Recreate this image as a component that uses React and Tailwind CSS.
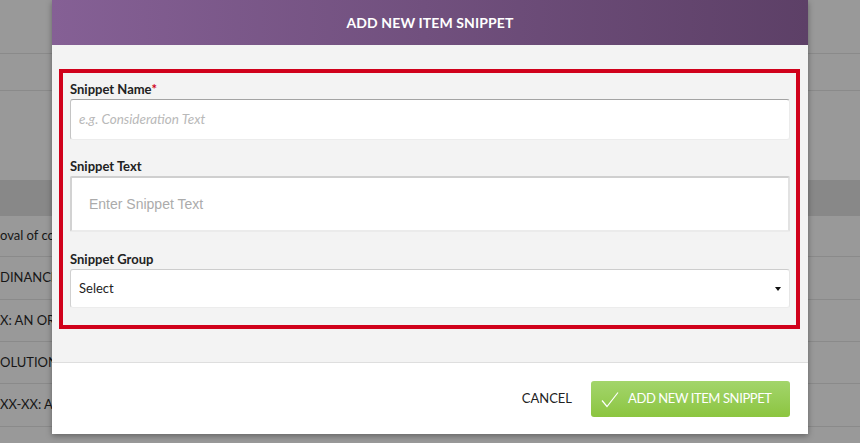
import React from "react";

const lato = { fontFamily: "Lato, 'Noto Sans', sans-serif" };

function BgRow({ text, h = "h-[42px]" }) {
  return (
    <div className={`${h} flex items-center border-b border-[#8a8a8a] text-[13px] text-[#161616] whitespace-nowrap overflow-hidden`}>
      <span>{text}</span>
    </div>
  );
}

export default function App() {
  return (
    <div className="relative w-[860px] h-[443px] overflow-hidden bg-[#999999]" style={lato}>
      {/* background page */}
      <div className="flex flex-col">
        <div className="h-[54px] border-b border-[#8a8a8a]" />
        <div className="h-[37px] border-b border-[#8a8a8a]" />
        <div className="h-[89px]" />
        <div className="h-[36px] bg-[#888888]" />
        <BgRow text="oval of contract" h="h-[41px]" />
        <BgRow text="DINANCE_" h="h-[43px]" />
        <BgRow text="X: AN ORDINANCE" />
        <BgRow text="OLUTION" />
        <BgRow text="XX-XX: A" h="h-[43px]" />
        <div className="h-[42px]" />
      </div>

      {/* modal */}
      <div className="absolute left-[52px] top-0 w-[756px] flex flex-col bg-white shadow-[0_2px_6px_rgba(0,0,0,0.35)]">
        <div className="h-[45px] flex items-center justify-center bg-gradient-to-r from-[#856095] to-[#5d4067]">
          <span className="text-white font-bold text-[14px] tracking-[0.1px]">ADD NEW ITEM SNIPPET</span>
        </div>
        <div className="bg-[#f3f3f3] pt-[24px] pb-[33px] pl-[7px] pr-[8px]">
          <div className="border-[4px] border-[#d0011b] pl-[7px] pr-[6px] pt-[8px] pb-[17px]">
            <div className="h-[18px] flex items-center text-[13px] font-bold text-[#222]">
              Snippet Name<span className="text-[#d0011b]">*</span>
            </div>
            <div className="h-[41px] flex items-center bg-white rounded-[3px] border border-t-[#a3a3a3] border-l-[#c4c4c4] border-r-[#ebebeb] border-b-[#ececec] pl-[8px]">
              <span className="italic text-[13.5px] text-[#b9b9b9]">e.g. Consideration Text</span>
            </div>

            <div className="mt-[18px] h-[18px] flex items-center text-[13px] font-bold text-[#222]">
              Snippet Text
            </div>
            <div className="h-[56px] flex items-center bg-white rounded-[2px] border-[2px] border-t-[#cfcfcf] border-l-[#d2d2d2] border-r-[#e2e2e2] border-b-[#ebebeb] pl-[17px]">
              <span className="text-[14px] text-[#ababab]" style={{ fontFamily: "'Liberation Sans', Arial, sans-serif" }}>
                Enter Snippet Text
              </span>
            </div>

            <div className="mt-[19px] h-[18px] flex items-center text-[13px] font-bold text-[#222]">
              Snippet Group
            </div>
            <div className="h-[39px] flex items-center justify-between bg-white rounded-[3px] border border-t-[#cdcdcd] border-l-[#d0d0d0] border-r-[#e6e6e6] border-b-[#ececec] pl-[8px] pr-[8px]">
              <span className="text-[13px] text-[#222]">Select</span>
              <span className="w-0 h-0 border-l-[3px] border-r-[3px] border-t-[4px] border-l-transparent border-r-transparent border-t-[#111]" />
            </div>
          </div>
        </div>
        <div className="h-[72px] border-t border-[#dedede] flex items-center justify-end pr-[18px] gap-[19px] pt-[1px]">
          <span className="text-[13px] text-[#222]">CANCEL</span>
          <div className="w-[199px] h-[36px] rounded-[3px] bg-gradient-to-b from-[#a3d56b] to-[#8cc53f] flex items-center pl-[10px] gap-[9px]">
            <svg width="18" height="17" viewBox="0 0 18 17" fill="none">
              <polyline points="1,9.5 6,15.5 17,1.5" stroke="white" strokeWidth="1.2" fill="none" />
            </svg>
            <span className="text-white text-[13px] tracking-[-0.4px]">ADD NEW ITEM SNIPPET</span>
          </div>
        </div>
      </div>
    </div>
  );
}
